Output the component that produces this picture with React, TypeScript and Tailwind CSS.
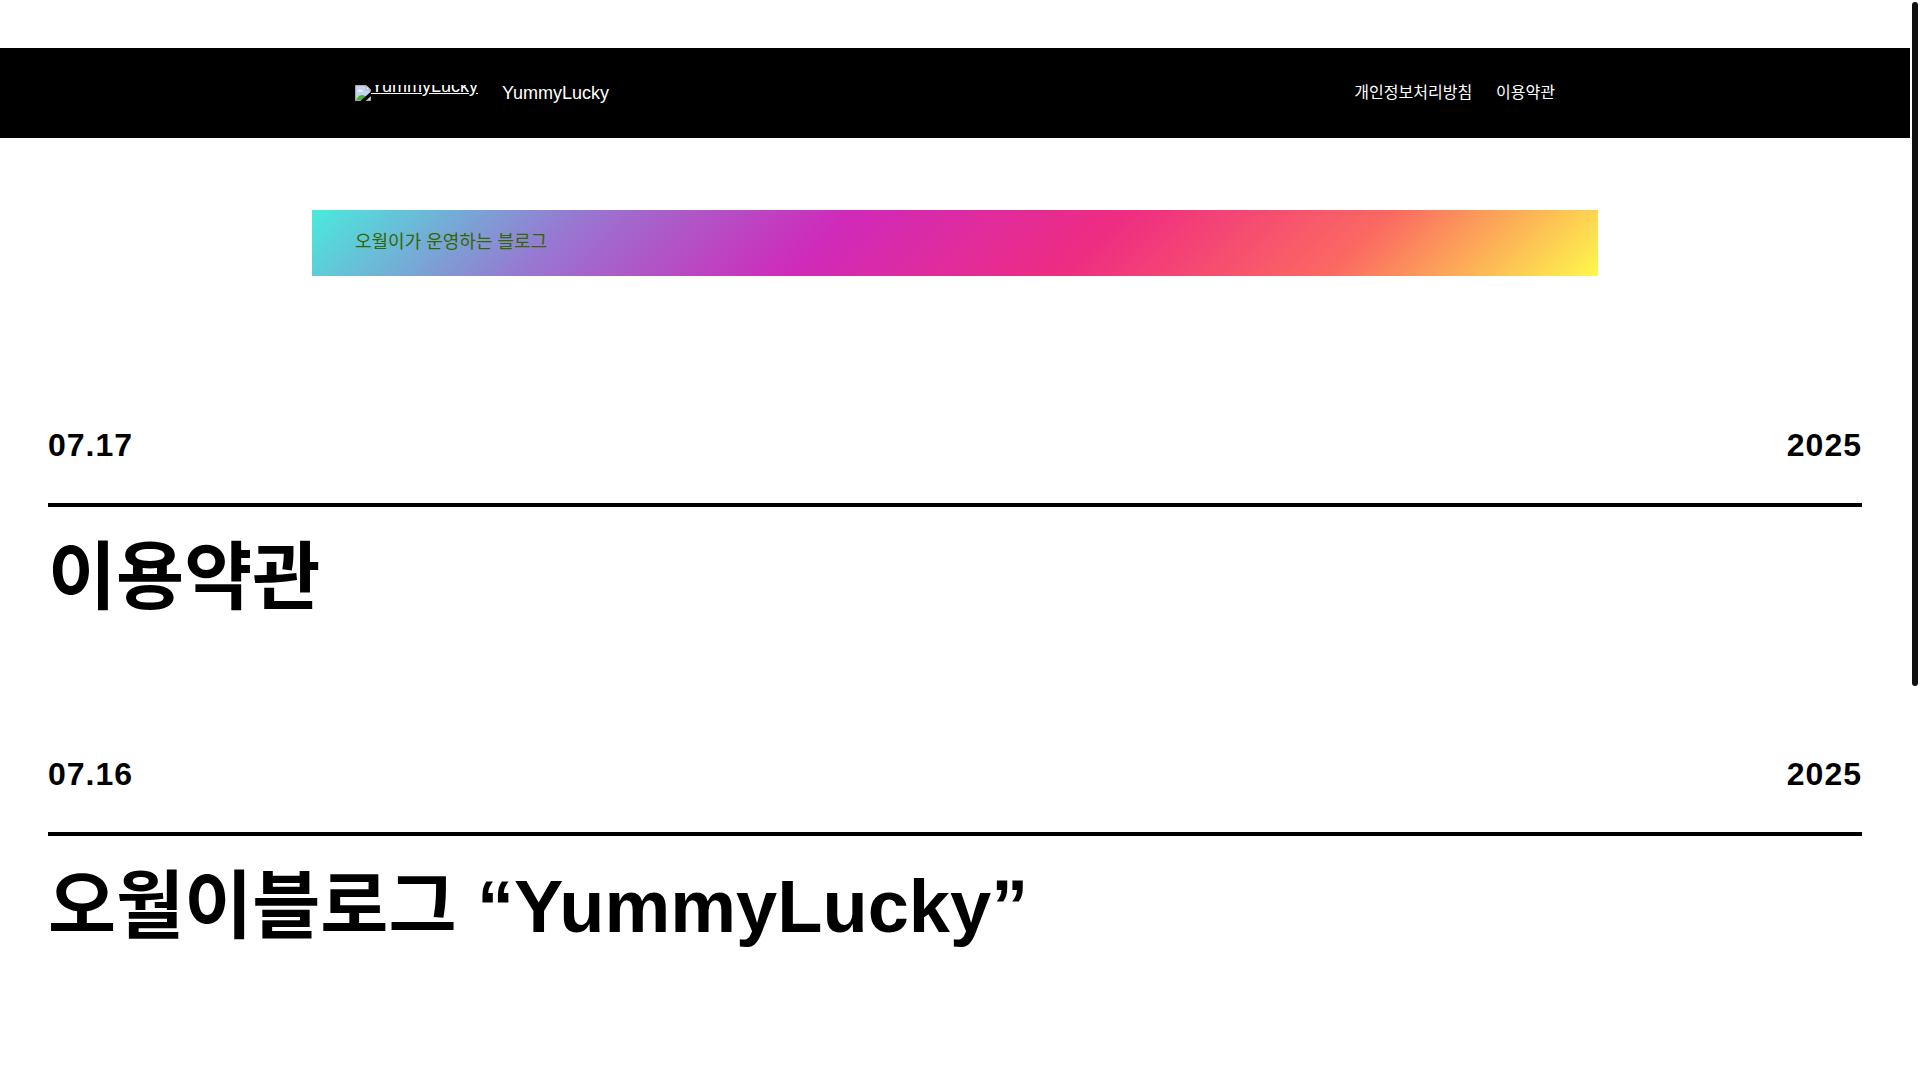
const posts = [
  { day: '07.17', year: '2025', title: '이용약관' },
  { day: '07.16', year: '2025', title: '오월이블로그 “YummyLucky”' },
];

function BrokenImageIcon() {
  return (
    <svg width="16" height="16" viewBox="0 0 16 16" className="block shrink-0" aria-hidden="true">
      <path d="M0.5 0.5H11L15.5 5V15.5H0.5Z" fill="#c3d3f8" stroke="#a8a8a8" />
      <path d="M2.5 6.5C2.5 4.5 4.6 4.4 5.2 5.1C6.8 4.6 8 5.6 7.6 6.5Z" fill="#fff" />
      <path d="M1 15C2.5 11.5 5 10 7 10C9.5 10 11.5 12 12.5 15Z" fill="#4fae32" />
      <path d="M11 0.5V5H15.5Z" fill="#f4f4f4" stroke="#a8a8a8" />
      <path d="M16 6.5L5.5 16H10.5L16 11Z" fill="#000" />
    </svg>
  );
}

function Header() {
  return (
    <header className="bg-black px-12 text-white">
      <div className="mx-auto flex h-[90px] max-w-[1200px] items-center justify-between">
        <div className="flex items-center gap-6">
          <a href="#home" className="flex h-4 items-end overflow-hidden underline">
            <BrokenImageIcon />
            <span className="text-lg leading-[30px]">YummyLucky</span>
          </a>
          <a href="#home" className="text-lg leading-[30px]">YummyLucky</a>
        </div>
        <nav className="flex gap-6 text-base">
          <a href="#privacy">개인정보처리방침</a>
          <a href="#terms">이용약관</a>
        </nav>
      </div>
    </header>
  );
}

export default function App() {
  return (
    <div
      lang="ko"
      className="flex h-screen overflow-hidden bg-white font-['Liberation_Sans','Noto_Sans_CJK_KR',sans-serif] text-black"
    >
      <div className="min-w-0 flex-1 overflow-hidden pt-12">
        <Header />
        <main>
          <p className="mx-auto mt-[72px] max-w-[1286px] bg-[linear-gradient(135deg,#4aeadc_0%,#9778d1_20%,#cf2aba_40%,#ee2c82_60%,#fb6962_80%,#fef84c_100%)] px-[43px] pt-[17px] pb-[19px] text-lg leading-[30px] text-[#336600]">
            오월이가 운영하는 블로그
          </p>
          <div className="flex flex-col gap-[122px] px-12 pt-36">
            {posts.map((post) => (
              <article key={post.day}>
                <div className="flex justify-between border-b-4 pb-8 text-[32px] leading-[51px] font-bold tracking-[1px]">
                  <time>{post.day}</time>
                  <span>{post.year}</span>
                </div>
                <h2 className="mt-[22px] text-[74px] leading-[98px] font-bold">
                  <a href="#post">{post.title}</a>
                </h2>
              </article>
            ))}
          </div>
        </main>
      </div>
      <div className="w-[10px] shrink-0 p-0.5" aria-hidden="true">
        <div className="h-[684px] w-1.5 rounded-full bg-[#111111]" />
      </div>
    </div>
  );
}
